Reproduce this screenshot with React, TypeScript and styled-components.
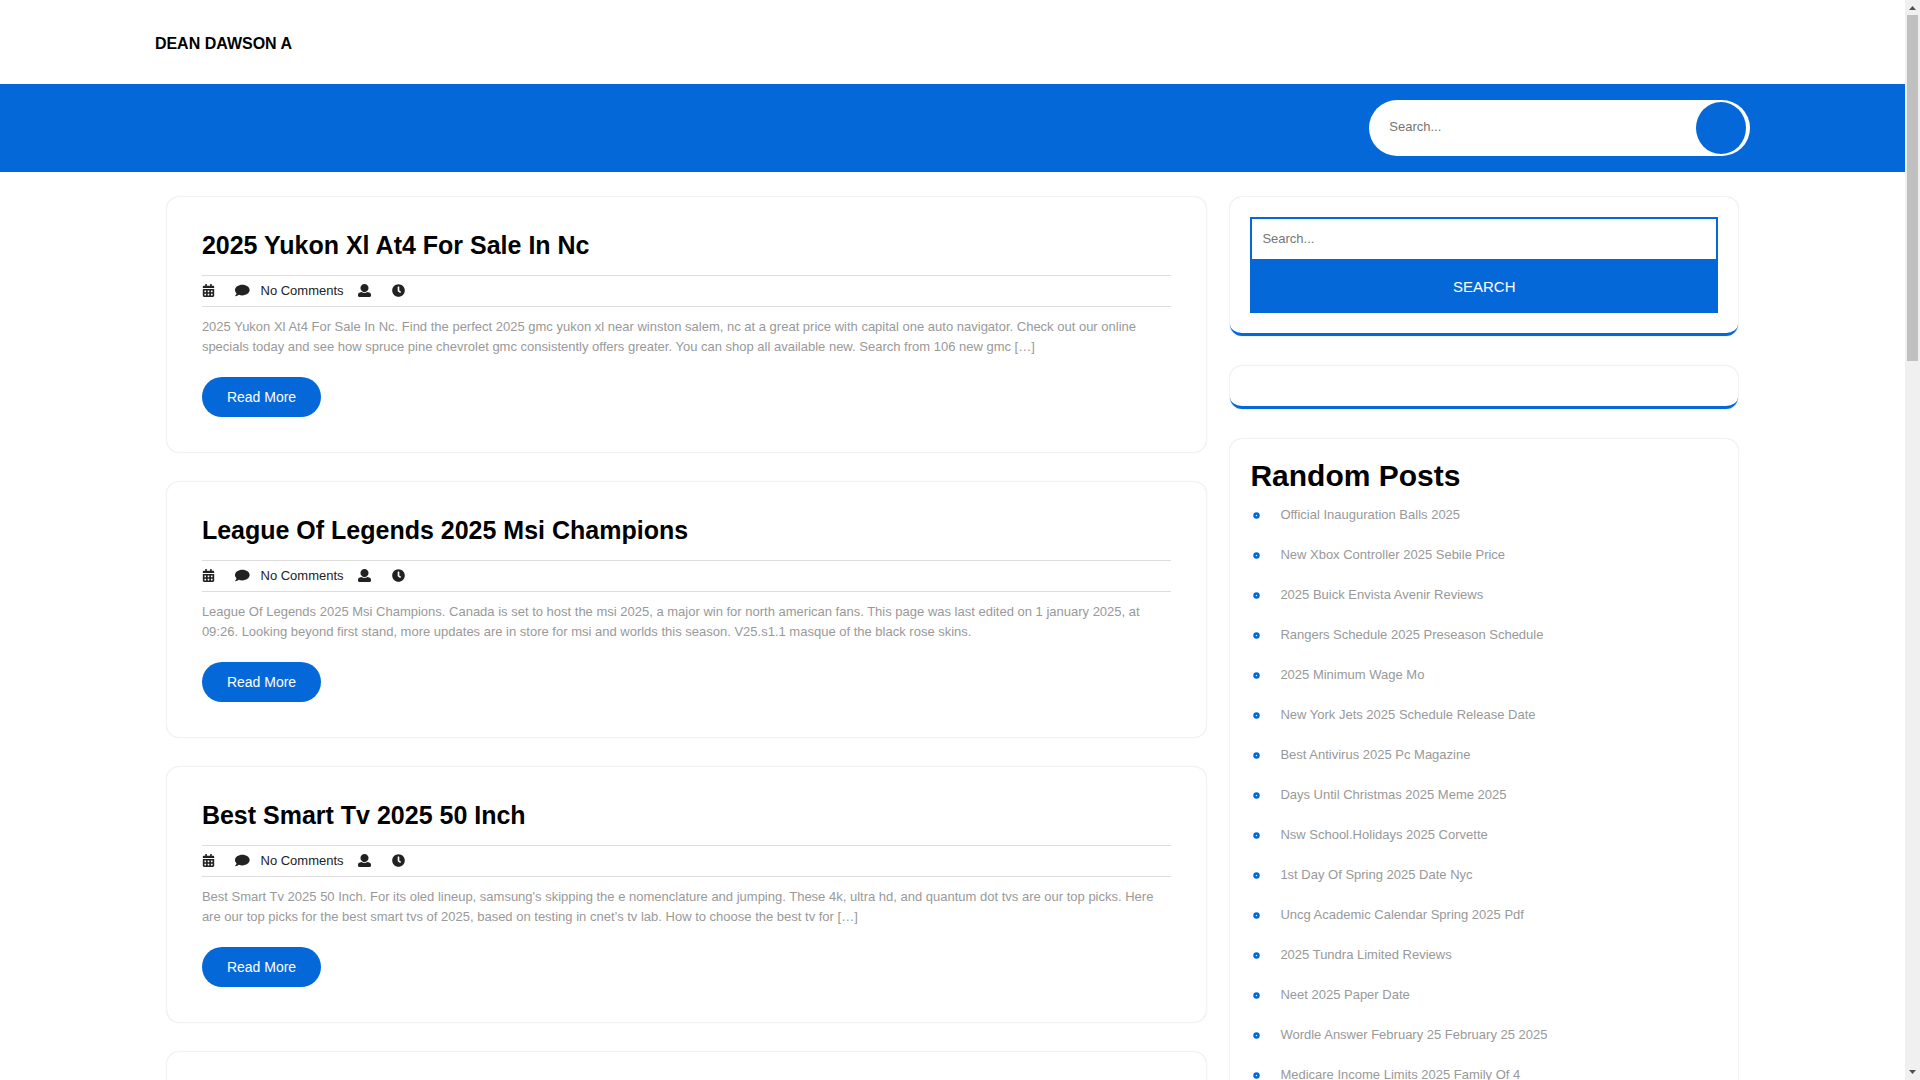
import React from "react";
import styled, { createGlobalStyle } from "styled-components";
import { FaCalendarAlt, FaClock } from "react-icons/fa";

const BLUE = "#0568d9";

const GlobalStyle = createGlobalStyle`
  *, *::before, *::after { box-sizing: border-box; }
  body {
    margin: 0;
    overflow: hidden;
    background: #fff;
    color: #222;
    font-family: "Liberation Sans", Arial, sans-serif;
    font-size: 13px;
    line-height: 20px;
  }
  a { color: inherit; text-decoration: none; }
  h1, h2, h3, p, ul { margin: 0; padding: 0; }
  input, button { font-family: inherit; }
`;

const Shell = styled.div`
  display: flex;
  height: 100vh;
`;

const Page = styled.div`
  flex: 1;
  min-width: 0;
  overflow: hidden;
`;

const Container = styled.div`
  width: 85%;
  margin: 0 auto;
  padding: 0 12px;
`;

const TopBar = styled.header`
  padding: 34px 0 30px;
`;

const SiteTitle = styled.h1`
  font-size: 16px;
  line-height: 20px;
  font-weight: 700;
  color: #000;
`;

const NavBar = styled.nav`
  background: ${BLUE};
  padding: 16px 0;
`;

const NavRow = styled.div`
  display: grid;
  grid-template-columns: repeat(4, 1fr);
  gap: 24px;
`;

const PillSearch = styled.form`
  grid-column: 4;
  display: flex;
  height: 56px;
  padding: 2px 4px 2px 20px;
  border-radius: 30px;
  background: #fff;
`;

const PillInput = styled.input`
  flex: 1;
  min-width: 0;
  padding: 0 0 4px;
  border: 0;
  outline: 0;
  background: transparent;
  font-size: 13px;
  &::placeholder { color: #757575; }
`;

const PillButton = styled.button`
  width: 50px;
  height: 52px;
  border: 0;
  border-radius: 50%;
  background: ${BLUE};
`;

const Content = styled.div`
  display: grid;
  grid-template-columns: 2fr 1fr;
  padding-top: 25px;
`;

const Posts = styled.main`
  display: flex;
  flex-direction: column;
  gap: 30px;
  min-width: 0;
  padding: 0 12px;
`;

const Post = styled.article`
  padding: 35px;
  border-radius: 12px;
  box-shadow: 0 0 2px #ccc;
`;

const PostTitle = styled.h2`
  margin-bottom: 17px;
  font-size: 25px;
  line-height: 26px;
  font-weight: 700;
  color: #000;
`;

const Meta = styled.div`
  display: flex;
  align-items: center;
  height: 32px;
  border: solid #ddd;
  border-width: 1px 0;
`;

const MetaItem = styled.span<{ $gap: number }>`
  display: flex;
  align-items: center;
  gap: 11px;
  margin-right: ${(p) => p.$gap}px;
  svg { display: block; height: 13px; width: auto; margin-bottom: 2px; }
`;

const Excerpt = styled.p`
  margin: 10px 0 20px;
  color: #999;
`;

const ReadMore = styled.a`
  display: inline-block;
  padding: 10px 25px;
  border-radius: 30px;
  background: ${BLUE};
  color: #fff;
  font-size: 14px;
  vertical-align: top;
`;

const Sidebar = styled.aside`
  display: flex;
  flex-direction: column;
  gap: 30px;
  min-width: 0;
  padding: 0 12px;
`;

const Widget = styled.section`
  padding: 20px;
  border-bottom: 3px solid ${BLUE};
  border-radius: 12px;
  box-shadow: 0 0 2px #ccc;
`;

const WidgetForm = styled.form`
  display: flex;
  flex-direction: column;
`;

const WidgetInput = styled.input`
  height: 44px;
  padding: 0 10px 2px;
  border: 2px solid ${BLUE};
  border-radius: 0;
  outline: 0;
  background: #fff;
  font-size: 13px;
  &::placeholder { color: #757575; }
`;

const WidgetButton = styled.button`
  height: 52px;
  padding: 0 0 2px;
  border: 0;
  background: ${BLUE};
  color: #fff;
  font-size: 15px;
`;

const WidgetTitle = styled.h3`
  margin-bottom: 2px;
  font-size: 30px;
  line-height: 34px;
  font-weight: 700;
  color: #000;
`;

const LinkList = styled.ul`
  list-style: none;
  color: #999;
`;

const LinkItem = styled.li`
  display: flex;
  align-items: center;
  gap: 20px;
  height: 40px;
  padding-left: 3px;
`;

const Bullet = styled.svg`
  display: block;
  width: 7px;
  height: 7px;
  fill: none;
  stroke: ${BLUE};
`;

const ScrollTrack = styled.div`
  display: flex;
  flex-direction: column;
  align-items: center;
  justify-content: space-between;
  width: 15px;
  background: #f0f0f0;
`;

const ScrollThumb = styled.div`
  flex: 0 0 32%;
  width: 11px;
  margin-bottom: auto;
  background: #c0c0c0;
`;

const ScrollArrow = styled.svg`
  display: block;
  width: 15px;
  height: 15px;
`;

const CommentIcon = () => (
  <svg viewBox="0 0 576 512" fill="currentColor" aria-hidden="true">
    <path d="M576 240c0 115-129 208-288 208-48.3 0-93.9-8.6-133.9-23.8-40.3 31.2-89.8 50.3-142.4 55.7-5.2.6-10.2-2.8-11.5-7.7-1.3-5 2.7-8.1 6.6-11.8 19.3-18.4 42.7-32.8 51.9-94.6C21.9 330.9 0 287.3 0 240 0 125.1 129 32 288 32s288 93.1 288 208z" />
  </svg>
);

const UserIcon = () => (
  <svg viewBox="0 0 512 512" fill="currentColor" aria-hidden="true">
    <path d="M256 0c88.366 0 160 71.634 160 160s-71.634 160-160 160S96 248.366 96 160 167.634 0 256 0zm183.283 333.821l-71.313-17.828c-74.923 53.89-165.738 41.864-223.94 0l-71.313 17.828C29.981 344.505 0 382.903 0 426.955V464c0 26.51 21.49 48 48 48h416c26.51 0 48-21.49 48-48v-37.045c0-44.052-29.981-82.45-72.717-93.134z" />
  </svg>
);

const posts = [
  {
    title: "2025 Yukon Xl At4 For Sale In Nc",
    text: "2025 Yukon Xl At4 For Sale In Nc. Find the perfect 2025 gmc yukon xl near winston salem, nc at a great price with capital one auto navigator. Check out our online specials today and see how spruce pine chevrolet gmc consistently offers greater. You can shop all available new. Search from 106 new gmc […]",
  },
  {
    title: "League Of Legends 2025 Msi Champions",
    text: "League Of Legends 2025 Msi Champions. Canada is set to host the msi 2025, a major win for north american fans. This page was last edited on 1 january 2025, at 09:26. Looking beyond first stand, more updates are in store for msi and worlds this season. V25.s1.1 masque of the black rose skins.",
  },
  {
    title: "Best Smart Tv 2025 50 Inch",
    text: "Best Smart Tv 2025 50 Inch. For its oled lineup, samsung's skipping the e nomenclature and jumping. These 4k, ultra hd, and quantum dot tvs are our top picks. Here are our top picks for the best smart tvs of 2025, based on testing in cnet’s tv lab. How to choose the best tv for […]",
  },
];

const randomPosts = [
  "Official Inauguration Balls 2025",
  "New Xbox Controller 2025 Sebile Price",
  "2025 Buick Envista Avenir Reviews",
  "Rangers Schedule 2025 Preseason Schedule",
  "2025 Minimum Wage Mo",
  "New York Jets 2025 Schedule Release Date",
  "Best Antivirus 2025 Pc Magazine",
  "Days Until Christmas 2025 Meme 2025",
  "Nsw School.Holidays 2025 Corvette",
  "1st Day Of Spring 2025 Date Nyc",
  "Uncg Academic Calendar Spring 2025 Pdf",
  "2025 Tundra Limited Reviews",
  "Neet 2025 Paper Date",
  "Wordle Answer February 25 February 25 2025",
  "Medicare Income Limits 2025 Family Of 4",
];

const PostMeta = () => (
  <Meta>
    <MetaItem $gap={20}><FaCalendarAlt aria-hidden="true" /></MetaItem>
    <MetaItem $gap={14}><CommentIcon />No Comments</MetaItem>
    <MetaItem $gap={21}><UserIcon /></MetaItem>
    <MetaItem $gap={0}><FaClock aria-hidden="true" /></MetaItem>
  </Meta>
);

export default function App() {
  return (
    <>
      <GlobalStyle />
      <Shell>
        <Page>
          <TopBar>
            <Container>
              <SiteTitle><a href="#">DEAN DAWSON A</a></SiteTitle>
            </Container>
          </TopBar>
          <NavBar>
            <Container>
              <NavRow>
                <PillSearch role="search" onSubmit={(e) => e.preventDefault()}>
                  <PillInput type="search" placeholder="Search..." aria-label="Search" />
                  <PillButton type="submit" aria-label="Search" />
                </PillSearch>
              </NavRow>
            </Container>
          </NavBar>
          <Container>
            <Content>
              <Posts>
                {posts.map((post) => (
                  <Post key={post.title}>
                    <PostTitle><a href="#">{post.title}</a></PostTitle>
                    <PostMeta />
                    <Excerpt>{post.text}</Excerpt>
                    <ReadMore href="#">Read More</ReadMore>
                  </Post>
                ))}
                <Post aria-hidden="true" />
              </Posts>
              <Sidebar>
                <Widget>
                  <WidgetForm role="search" onSubmit={(e) => e.preventDefault()}>
                    <WidgetInput type="search" placeholder="Search..." aria-label="Search posts" />
                    <WidgetButton type="submit">SEARCH</WidgetButton>
                  </WidgetForm>
                </Widget>
                <Widget />
                <Widget>
                  <WidgetTitle>Random Posts</WidgetTitle>
                  <LinkList>
                    {randomPosts.map((name) => (
                      <LinkItem key={name}>
                        <Bullet viewBox="0 0 14 14" aria-hidden="true">
                          <circle cx="7" cy="7" r="4" strokeWidth="5" />
                        </Bullet>
                        <a href="#">{name}</a>
                      </LinkItem>
                    ))}
                  </LinkList>
                </Widget>
              </Sidebar>
            </Content>
          </Container>
        </Page>
        <ScrollTrack aria-hidden="true">
          <ScrollArrow viewBox="0 0 15 15"><path d="M4 10h7L7.500 6z" fill="#505050" /></ScrollArrow>
          <ScrollThumb />
          <ScrollArrow viewBox="0 0 15 15"><path d="M4 5h7L7.500 9z" fill="#505050" /></ScrollArrow>
        </ScrollTrack>
      </Shell>
    </>
  );
}
